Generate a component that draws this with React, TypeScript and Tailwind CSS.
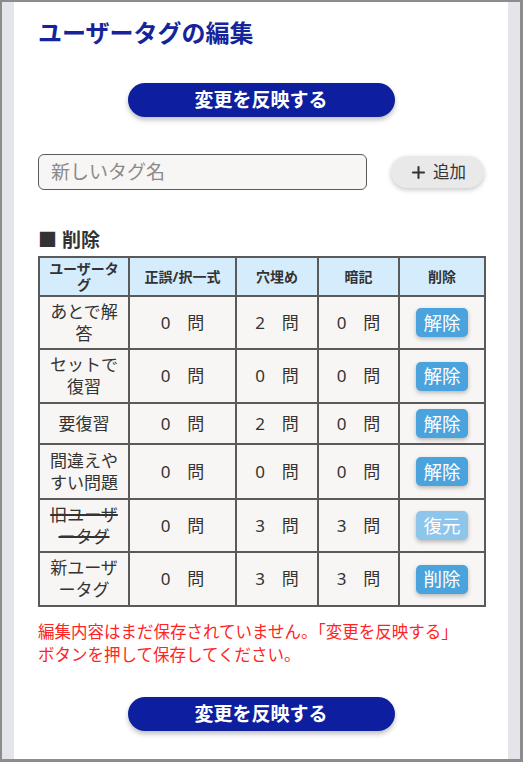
import { Plus } from "lucide-react";

type TagRow = {
  name: string;
  counts: [number, number, number];
  action: "解除" | "復元" | "削除";
  removed?: boolean;
  height: string;
};

const rows: TagRow[] = [
  { name: "あとで解答", counts: [0, 2, 0], action: "解除", height: "h-[53px]" },
  { name: "セットで復習", counts: [0, 0, 0], action: "解除", height: "h-[54px]" },
  { name: "要復習", counts: [0, 2, 0], action: "解除", height: "h-[41px]" },
  { name: "間違えやすい問題", counts: [0, 0, 0], action: "解除", height: "h-[55px]" },
  { name: "旧ユーザータグ", counts: [0, 3, 3], action: "復元", removed: true, height: "h-[53px]" },
  { name: "新ユーザータグ", counts: [0, 3, 3], action: "削除", height: "h-[54px]" },
];

const font = { fontFamily: '"Noto Sans", "Noto Sans CJK JP", sans-serif' };

const SaveButton = () => (
  <button className="mx-auto flex h-[34px] w-[267px] items-center justify-center rounded-full bg-[#0d1f9f] text-[19px] font-bold text-white shadow-[0_3px_5px_rgba(0,0,0,0.25)]">
    変更を反映する
  </button>
);

export default function App() {
  return (
    <div
      className="h-[762px] w-[523px] border-t-2 border-l-2 border-r-[3px] border-b-[3px] border-[#8c8c8c] bg-[#e4e5ea] px-3"
      style={font}
    >
      <div className="h-full bg-white px-6 pt-[15px]">
        <h1 className="text-[24px] font-bold leading-[32px] text-[#16249b]">ユーザータグの編集</h1>

        <div className="mt-[34px]">
          <SaveButton />
        </div>

        {/* new tag */}
        <div className="mt-[37px] flex items-center justify-between">
          <input
            placeholder="新しいタグ名"
            className="h-[36px] w-[329px] rounded-md border-[1.5px] border-[#5a5a5a] bg-[#f8f6f4] px-3 text-[19px] text-[#333] placeholder:text-[#8a8a8a] outline-none"
          />
          <button className="flex h-[32px] w-[93px] items-center justify-center gap-[5px] rounded-full bg-[#e9e9e9] text-[16.5px] text-[#333] shadow-[0_2px_5px_rgba(0,0,0,0.22)]">
            <Plus size={19} strokeWidth={2.6} />
            追加
          </button>
        </div>

        <h2 className="mt-[37px] text-[19px] font-bold leading-[26px] text-[#333]">■ 削除</h2>

        <table className="mt-[3px] w-[446px] table-fixed border-collapse text-[#333]">
          <colgroup>
            <col className="w-[90px]" />
            <col className="w-[107px]" />
            <col className="w-[82px]" />
            <col className="w-[81px]" />
            <col className="w-[86px]" />
          </colgroup>
          <thead>
            <tr className="h-[39px] bg-[#d4ecfc] text-[14px] font-bold leading-[16px]">
              <th className="border-2 border-[#5a5a5a] px-2">ユーザータグ</th>
              <th className="border-2 border-[#5a5a5a] px-1">正誤/択一式</th>
              <th className="border-2 border-[#5a5a5a] px-1">穴埋め</th>
              <th className="border-2 border-[#5a5a5a] px-1">暗記</th>
              <th className="border-2 border-[#5a5a5a] px-1">削除</th>
            </tr>
          </thead>
          <tbody>
            {rows.map((r) => (
              <tr key={r.name} className={`${r.height} bg-[#f8f6f4] text-[17px] leading-[22px]`}>
                <td className="border-2 border-[#5a5a5a] px-2 text-center">
                  <span className={r.removed ? "line-through decoration-[#333] decoration-[1.5px]" : ""}>{r.name}</span>
                </td>
                {r.counts.map((c, i) => (
                  <td key={i} className="border-2 border-[#5a5a5a] text-center whitespace-pre">
                    {c}　問
                  </td>
                ))}
                <td className="border-2 border-[#5a5a5a] text-center">
                  <button
                    className={`inline-flex h-[29px] items-center rounded-[5px] px-[7px] text-[18.5px] text-white shadow-[0_2px_4px_rgba(0,0,0,0.25)] ${
                      r.action === "復元" ? "bg-[#8ec5ea]" : "bg-[#4aa3dc]"
                    }`}
                  >
                    {r.action}
                  </button>
                </td>
              </tr>
            ))}
          </tbody>
        </table>

        <p className="mt-[13px] text-[16.5px] leading-[23px] text-[#ff2424]">
          編集内容はまだ保存されていません。「変更を反映する」
          <br />
          ボタンを押して保存してください。
        </p>

        <div className="mt-[31px]">
          <SaveButton />
        </div>
      </div>
    </div>
  );
}
